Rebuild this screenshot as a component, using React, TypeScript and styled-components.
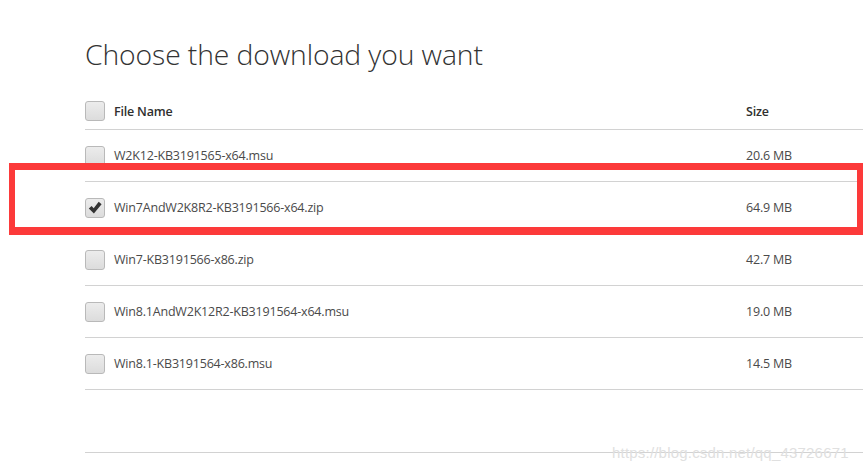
import React from "react";
import styled, { createGlobalStyle } from "styled-components";

const Global = createGlobalStyle`
  html, body { margin: 0; padding: 0; background: #fff; }
  body { width: 863px; height: 471px; overflow: hidden; }
`;

const Page = styled.div`
  position: relative;
  width: 863px;
  height: 471px;
  padding: 34px 0 0 85px;
  box-sizing: border-box;
  font-family: "Open Sans", "Noto Sans", sans-serif;
`;

const Title = styled.h1`
  margin: 0 0 19px 0;
  font-weight: 300;
  font-size: 28.3px;
  line-height: 40px;
  color: #333;
  letter-spacing: -0.1px;
`;

const Table = styled.div`
  display: flex;
  flex-direction: column;
`;

const Row = styled.div<{ $header?: boolean }>`
  display: grid;
  grid-template-columns: 29px 632px 1fr;
  align-items: center;
  height: ${(p) => (p.$header ? "36px" : "51px")};
  border-bottom: 1px solid #d2d2d2;
  font-size: 12.5px;
  font-weight: ${(p) => (p.$header ? 600 : 400)};
  color: ${(p) => (p.$header ? "#2f2f2f" : "#4a4a4a")};
  letter-spacing: -0.2px;
`;

const Box = styled.span`
  position: relative;
  display: block;
  width: 18px;
  height: 18px;
  border: 1px solid #b9b9b9;
  border-radius: 3px;
  background: linear-gradient(#ececec, #dcdcdc);
`;

const Check = styled.svg`
  position: absolute;
  left: 1px;
  top: 1px;
`;

const Spacer = styled.div`
  height: 62px;
  border-bottom: 1px solid #d2d2d2;
`;

const RedFrame = styled.div`
  position: absolute;
  left: 9px;
  top: 163px;
  width: 854px;
  height: 72px;
  box-sizing: border-box;
  border: 6px solid #fc3a3a;
  border-top-width: 7px;
  border-bottom-width: 8px;
`;

const Watermark = styled.div`
  position: absolute;
  left: 612px;
  top: 444px;
  font-family: "Liberation Sans", Arial, sans-serif;
  font-size: 15px;
  color: #e0e0e0;
  letter-spacing: 0.2px;
`;

const files = [
  { name: "W2K12-KB3191565-x64.msu", size: "20.6 MB", checked: false },
  { name: "Win7AndW2K8R2-KB3191566-x64.zip", size: "64.9 MB", checked: true },
  { name: "Win7-KB3191566-x86.zip", size: "42.7 MB", checked: false },
  { name: "Win8.1AndW2K12R2-KB3191564-x64.msu", size: "19.0 MB", checked: false },
  { name: "Win8.1-KB3191564-x86.msu", size: "14.5 MB", checked: false },
];

const CheckBox = ({ checked }: { checked?: boolean }) => (
  <Box>
    {checked && (
      <Check width="16" height="16" viewBox="0 0 16 16">
        <path d="M1.8 8.6 L4.6 5.9 L6.7 8.3 L11.7 1.8 L14.6 4.3 L6.9 13.6 Z" fill="#333" />
      </Check>
    )}
  </Box>
);

export default function App() {
  return (
    <>
      <Global />
      <Page>
        <Title>Choose the download you want</Title>
        <Table>
          <Row $header>
            <CheckBox />
            <span>File Name</span>
            <span>Size</span>
          </Row>
          {files.map((f) => (
            <Row key={f.name}>
              <CheckBox checked={f.checked} />
              <span>{f.name}</span>
              <span>{f.size}</span>
            </Row>
          ))}
          <Spacer />
        </Table>
        <RedFrame />
        <Watermark>https://blog.csdn.net/qq_43726671</Watermark>
      </Page>
    </>
  );
}
